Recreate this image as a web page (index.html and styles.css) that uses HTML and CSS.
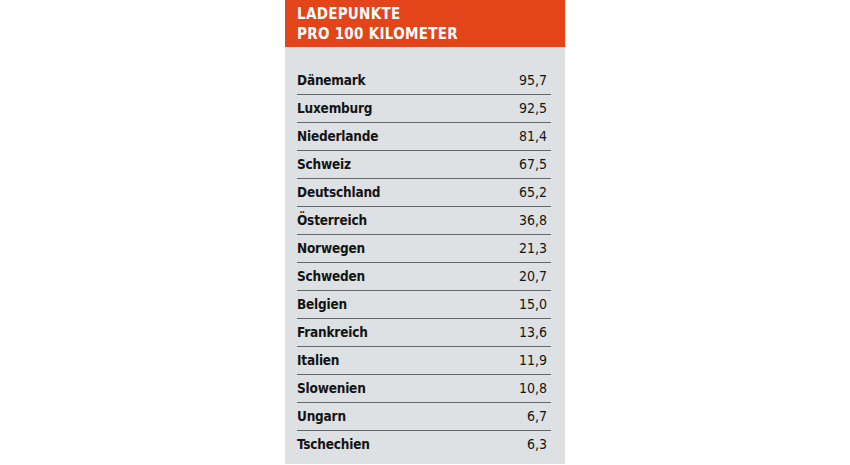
FILE: index.html
```html
<!DOCTYPE html>
<html lang="de">
<head>
    <meta charset="UTF-8">
    <meta name="viewport" content="width=device-width, initial-scale=1.0">
    <title>Ladepunkte pro 100 Kilometer</title>
    <link rel="stylesheet" href="styles.css">
</head>
<body>
    <div class="chart">
        <div class="chart-head">
            <div>LADEPUNKTE</div>
            <div>PRO 100 KILOMETER</div>
        </div>
        <ul class="chart-list">
            <li><span class="land">Dänemark</span><span class="wert">95,7</span></li>
            <li><span class="land">Luxemburg</span><span class="wert">92,5</span></li>
            <li><span class="land">Niederlande</span><span class="wert">81,4</span></li>
            <li><span class="land">Schweiz</span><span class="wert">67,5</span></li>
            <li><span class="land">Deutschland</span><span class="wert">65,2</span></li>
            <li><span class="land">Österreich</span><span class="wert">36,8</span></li>
            <li><span class="land">Norwegen</span><span class="wert">21,3</span></li>
            <li><span class="land">Schweden</span><span class="wert">20,7</span></li>
            <li><span class="land">Belgien</span><span class="wert">15,0</span></li>
            <li><span class="land">Frankreich</span><span class="wert">13,6</span></li>
            <li><span class="land">Italien</span><span class="wert">11,9</span></li>
            <li><span class="land">Slowenien</span><span class="wert">10,8</span></li>
            <li><span class="land">Ungarn</span><span class="wert">6,7</span></li>
            <li><span class="land">Tschechien</span><span class="wert">6,3</span></li>
        </ul>
    </div>
</body>
</html>
```

FILE: styles.css
```css
body {
    margin: 0;
    background-color: #fff;
    font-family: "DejaVu Sans Condensed", "DejaVu Sans", sans-serif;
    color: #141414;
}

.chart {
    width: 280px;
    margin: 0 auto;
}

.chart-head {
    height: 47px;
    box-sizing: border-box;
    padding: 4px 12px 0;
    background-color: #e4441a;
    color: #fff;
    font-size: 15px;
    font-weight: bold;
    line-height: 20px;
    letter-spacing: 0.3px;
}

.chart-list {
    list-style-type: none;
    margin: 0;
    padding: 20px 14px 5px 12px;
    background-color: #dde1e3;
}

.chart-list li {
    display: flex;
    justify-content: space-between;
    align-items: center;
    height: 28px;
    box-sizing: border-box;
    border-bottom: 1px solid #62686b;
    padding: 0 4px 2px 0;
    font-size: 14px;
}

.chart-list li:last-child {
    border-bottom: none;
}

.land {
    font-size: 13.5px;
    font-weight: bold;
    letter-spacing: -0.2px;
}
```
